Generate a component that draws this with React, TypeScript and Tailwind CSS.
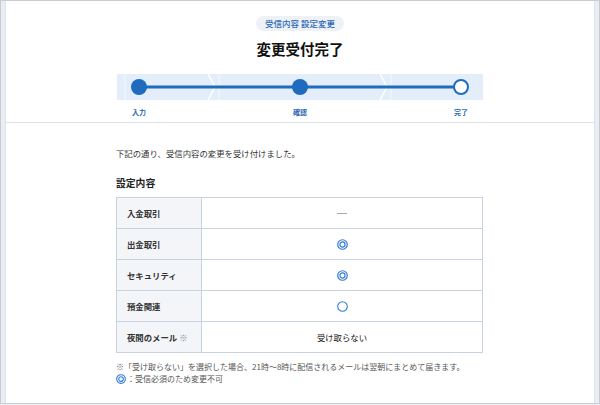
import React from 'react';

const font = { fontFamily: '"Noto Sans CJK JP", "Noto Sans", sans-serif' };

const DoubleCircle = ({ size = 11 }: { size?: number }) => (
  <svg width={size} height={size} viewBox="0 0 12 12" className="block">
    <circle cx="6" cy="6" r="5.2" fill="none" stroke="#2f7bd6" strokeWidth="1.3" />
    <circle cx="6" cy="6" r="2.8" fill="none" stroke="#2f7bd6" strokeWidth="1.3" />
  </svg>
);

const SingleCircle = () => (
  <svg width={11} height={11} viewBox="0 0 12 12" className="block">
    <circle cx="6" cy="6" r="5.2" fill="none" stroke="#2f7bd6" strokeWidth="1.2" />
  </svg>
);

const Stepper = () => (
  <div className="mx-auto mt-[17px] w-[366px]">
    <svg width="366" height="26" viewBox="0 0 366 26" className="block">
      <rect x="0" y="0" width="366" height="26" fill="#e3eefa" />
      <line x1="8" y1="0" x2="8" y2="26" stroke="#ffffff" strokeWidth="0.8" opacity="0.7" />
      <polyline points="91,0 98,13 91,26" fill="none" stroke="#ffffff" strokeWidth="1.5" />
      <line x1="102" y1="0" x2="102" y2="26" stroke="#ffffff" strokeWidth="0.8" opacity="0.8" />
      <polyline points="263,0 270,13 263,26" fill="none" stroke="#ffffff" strokeWidth="1.5" />
      <line x1="274" y1="0" x2="274" y2="26" stroke="#ffffff" strokeWidth="0.8" opacity="0.8" />
      <line x1="22" y1="13" x2="344" y2="13" stroke="#1f6bbd" strokeWidth="3" />
      <circle cx="22" cy="13" r="8" fill="#1f6bbd" />
      <circle cx="183" cy="13" r="8" fill="#1f6bbd" />
      <circle cx="344" cy="13" r="7" fill="#ffffff" stroke="#1f6bbd" strokeWidth="2" />
    </svg>
    <div className="mt-[8px] flex justify-between text-[7px] font-bold leading-[9px] text-[#2a68b4]">
      <span className="w-[44px] text-center">入力</span>
      <span className="w-[44px] text-center">確認</span>
      <span className="w-[44px] text-center">完了</span>
    </div>
  </div>
);

const rows: { label: React.ReactNode; value: React.ReactNode }[] = [
  { label: '入金取引', value: <span className="block h-px w-[10px] bg-[#a4aab2]" /> },
  { label: '出金取引', value: <DoubleCircle /> },
  { label: 'セキュリティ', value: <DoubleCircle /> },
  { label: '預金関連', value: <SingleCircle /> },
  {
    label: (
      <>
        夜間のメール <span className="font-normal text-[#8a9099]">※</span>
      </>
    ),
    value: <span className="font-normal text-[#111]">受け取らない</span>,
  },
];

export default function App() {
  return (
    <div className="h-[405px] w-[600px] bg-[#eef1f5]" style={font}>
      <div className="flex h-[404px] border border-[#c8cbd0]">
        <div className="w-[5px] border-r border-[#dfe4ec] bg-[#eaeef4]" />
        <div className="flex-1 bg-white">
          <div className="h-[122px] border-b border-[#dde2ea] pt-[15px]">
            <div className="flex justify-center">
              <span className="rounded-full bg-[#eef2f7] px-[9px] text-[8.5px] font-medium leading-[15px] text-[#2d69b3]">
                受信内容 設定変更
              </span>
            </div>
            <h1 className="mt-[10px] text-center text-[14.5px] font-bold leading-[16px] text-[#111]">
              変更受付完了
            </h1>
            <Stepper />
          </div>

          <div className="pl-[110px] pr-[110px]">
            <p className="mt-[24px] text-[8.4px] leading-[12px] text-[#333]">
              下記の通り、受信内容の変更を受け付けました。
            </p>
            <h2 className="mt-[18px] text-[9.8px] font-bold leading-[12px] text-[#222]">設定内容</h2>
            <table className="mt-[8px] w-[367px] border-collapse border border-[#c9d3e0] text-[8.4px]">
              <tbody>
                {rows.map((r, i) => (
                  <tr key={i} className="h-[31px]">
                    <td className="w-[85px] border border-[#c9d3e0] bg-[#f3f5f8] pl-[10px] font-bold text-[#333]">
                      {r.label}
                    </td>
                    <td className="border border-[#c9d3e0]">
                      <div className="flex items-center justify-center">{r.value}</div>
                    </td>
                  </tr>
                ))}
              </tbody>
            </table>
            <p className="mt-[8px] whitespace-nowrap text-[8px] leading-[11px] text-[#555]">
              ※「受け取らない」を選択した場合、21時〜8時に配信されるメールは翌朝にまとめて届きます。
            </p>
            <div className="mt-[1px] flex items-center gap-[1px] text-[8px] leading-[11px] text-[#555]">
              <DoubleCircle size={10} />
              <span>：受信必須のため変更不可</span>
            </div>
          </div>
        </div>
        <div className="w-[5px] border-l border-[#dfe4ec] bg-[#eaeef4]" />
      </div>
    </div>
  );
}
